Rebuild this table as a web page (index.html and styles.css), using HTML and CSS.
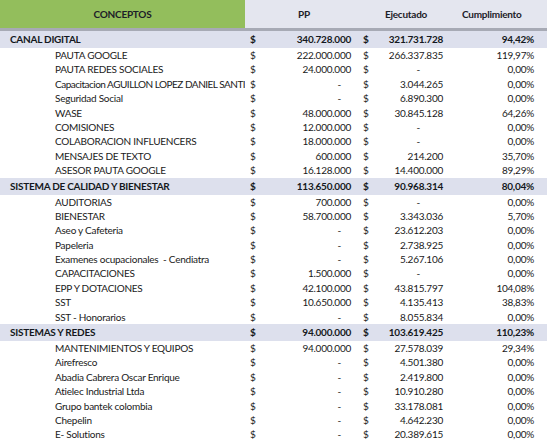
FILE: index.html
```html
<!DOCTYPE html>
<html>
<head>
<meta charset="utf-8">
<link rel="stylesheet" href="styles.css">
</head>
<body>
<div class="sheet">
  <div class="row head">
    <div class="c-concept head-green">CONCEPTOS</div>
    <div class="c-sign"></div>
    <div class="c-pp head-pp">PP</div>
    <div class="c-sign2"></div>
    <div class="c-ej head-ej">Ejecutado</div>
    <div class="c-cu head-cu">Cumplimiento</div>
  </div>

  <div class="row sec"><div class="c-concept">CANAL DIGITAL</div><div class="c-sign">$</div><div class="c-pp">340.728.000</div><div class="c-sign2">$</div><div class="c-ej">321.731.728</div><div class="c-cu">94,42%</div></div>
  <div class="row"><div class="c-concept sub">PAUTA GOOGLE</div><div class="c-sign">$</div><div class="c-pp">222.000.000</div><div class="c-sign2">$</div><div class="c-ej">266.337.835</div><div class="c-cu">119,97%</div></div>
  <div class="row"><div class="c-concept sub">PAUTA REDES SOCIALES</div><div class="c-sign">$</div><div class="c-pp">24.000.000</div><div class="c-sign2">$</div><div class="c-ej dash">-</div><div class="c-cu">0,00%</div></div>
  <div class="row"><div class="c-concept sub long">Capacitacion AGUILLON LOPEZ DANIEL SANTI</div><div class="c-sign">$</div><div class="c-pp dash">-</div><div class="c-sign2">$</div><div class="c-ej">3.044.265</div><div class="c-cu">0,00%</div></div>
  <div class="row"><div class="c-concept sub">Seguridad Social</div><div class="c-sign">$</div><div class="c-pp dash">-</div><div class="c-sign2">$</div><div class="c-ej">6.890.300</div><div class="c-cu">0,00%</div></div>
  <div class="row"><div class="c-concept sub">WASE</div><div class="c-sign">$</div><div class="c-pp">48.000.000</div><div class="c-sign2">$</div><div class="c-ej">30.845.128</div><div class="c-cu">64,26%</div></div>
  <div class="row"><div class="c-concept sub">COMISIONES</div><div class="c-sign">$</div><div class="c-pp">12.000.000</div><div class="c-sign2">$</div><div class="c-ej dash">-</div><div class="c-cu">0,00%</div></div>
  <div class="row"><div class="c-concept sub">COLABORACION INFLUENCERS</div><div class="c-sign">$</div><div class="c-pp">18.000.000</div><div class="c-sign2">$</div><div class="c-ej dash">-</div><div class="c-cu">0,00%</div></div>
  <div class="row"><div class="c-concept sub">MENSAJES DE TEXTO</div><div class="c-sign">$</div><div class="c-pp">600.000</div><div class="c-sign2">$</div><div class="c-ej">214.200</div><div class="c-cu">35,70%</div></div>
  <div class="row"><div class="c-concept sub">ASESOR PAUTA GOOGLE</div><div class="c-sign">$</div><div class="c-pp">16.128.000</div><div class="c-sign2">$</div><div class="c-ej">14.400.000</div><div class="c-cu">89,29%</div></div>

  <div class="row sec"><div class="c-concept">SISTEMA DE CALIDAD Y BIENESTAR</div><div class="c-sign">$</div><div class="c-pp">113.650.000</div><div class="c-sign2">$</div><div class="c-ej">90.968.314</div><div class="c-cu">80,04%</div></div>
  <div class="row"><div class="c-concept sub">AUDITORIAS</div><div class="c-sign">$</div><div class="c-pp">700.000</div><div class="c-sign2">$</div><div class="c-ej dash">-</div><div class="c-cu">0,00%</div></div>
  <div class="row"><div class="c-concept sub">BIENESTAR</div><div class="c-sign">$</div><div class="c-pp">58.700.000</div><div class="c-sign2">$</div><div class="c-ej">3.343.036</div><div class="c-cu">5,70%</div></div>
  <div class="row"><div class="c-concept sub">Aseo y Cafeteria</div><div class="c-sign">$</div><div class="c-pp dash">-</div><div class="c-sign2">$</div><div class="c-ej">23.612.203</div><div class="c-cu">0,00%</div></div>
  <div class="row"><div class="c-concept sub">Papeleria</div><div class="c-sign">$</div><div class="c-pp dash">-</div><div class="c-sign2">$</div><div class="c-ej">2.738.925</div><div class="c-cu">0,00%</div></div>
  <div class="row"><div class="c-concept sub">Examenes ocupacionales&nbsp; - Cendiatra</div><div class="c-sign">$</div><div class="c-pp dash">-</div><div class="c-sign2">$</div><div class="c-ej">5.267.106</div><div class="c-cu">0,00%</div></div>
  <div class="row"><div class="c-concept sub">CAPACITACIONES</div><div class="c-sign">$</div><div class="c-pp">1.500.000</div><div class="c-sign2">$</div><div class="c-ej dash">-</div><div class="c-cu">0,00%</div></div>
  <div class="row"><div class="c-concept sub">EPP Y DOTACIONES</div><div class="c-sign">$</div><div class="c-pp">42.100.000</div><div class="c-sign2">$</div><div class="c-ej">43.815.797</div><div class="c-cu">104,08%</div></div>
  <div class="row"><div class="c-concept sub">SST</div><div class="c-sign">$</div><div class="c-pp">10.650.000</div><div class="c-sign2">$</div><div class="c-ej">4.135.413</div><div class="c-cu">38,83%</div></div>
  <div class="row"><div class="c-concept sub">SST - Honorarios</div><div class="c-sign">$</div><div class="c-pp dash">-</div><div class="c-sign2">$</div><div class="c-ej">8.055.834</div><div class="c-cu">0,00%</div></div>

  <div class="row sec"><div class="c-concept">SISTEMAS Y REDES</div><div class="c-sign">$</div><div class="c-pp">94.000.000</div><div class="c-sign2">$</div><div class="c-ej">103.619.425</div><div class="c-cu">110,23%</div></div>
  <div class="row"><div class="c-concept sub">MANTENIMIENTOS Y EQUIPOS</div><div class="c-sign">$</div><div class="c-pp">94.000.000</div><div class="c-sign2">$</div><div class="c-ej">27.578.039</div><div class="c-cu">29,34%</div></div>
  <div class="row"><div class="c-concept sub">Airefresco</div><div class="c-sign">$</div><div class="c-pp dash">-</div><div class="c-sign2">$</div><div class="c-ej">4.501.380</div><div class="c-cu">0,00%</div></div>
  <div class="row"><div class="c-concept sub">Abadia Cabrera Oscar Enrique</div><div class="c-sign">$</div><div class="c-pp dash">-</div><div class="c-sign2">$</div><div class="c-ej">2.419.800</div><div class="c-cu">0,00%</div></div>
  <div class="row"><div class="c-concept sub">Atielec Industrial Ltda</div><div class="c-sign">$</div><div class="c-pp dash">-</div><div class="c-sign2">$</div><div class="c-ej">10.910.280</div><div class="c-cu">0,00%</div></div>
  <div class="row"><div class="c-concept sub">Grupo bantek colombia</div><div class="c-sign">$</div><div class="c-pp dash">-</div><div class="c-sign2">$</div><div class="c-ej">33.178.081</div><div class="c-cu">0,00%</div></div>
  <div class="row"><div class="c-concept sub">Chepelin</div><div class="c-sign">$</div><div class="c-pp dash">-</div><div class="c-sign2">$</div><div class="c-ej">4.642.230</div><div class="c-cu">0,00%</div></div>
  <div class="row"><div class="c-concept sub">E- Solutions</div><div class="c-sign">$</div><div class="c-pp dash">-</div><div class="c-sign2">$</div><div class="c-ej">20.389.615</div><div class="c-cu">0,00%</div></div>
</div>
</body>
</html>
```
FILE: styles.css
```css
html, body {
  margin: 0;
  padding: 0;
  background: #ffffff;
}
.sheet {
  width: 547px;
  font-family: Lato, "Open Sans", sans-serif;
  font-size: 10px;
  letter-spacing: -0.25px;
  color: #1a1a1a;
}
.row {
  display: grid;
  grid-template-columns: 245px 50px 60px 20px 90px 82px;
  height: 14.4px;
  line-height: 14.4px;
  white-space: nowrap;
}
.row > div {
  overflow: hidden;
}
.c-concept { padding-left: 10px; }
.c-concept.sub { padding-left: 55px; }
.c-concept.long { letter-spacing: -0.5px; }
.c-sign { padding-left: 5px; }
.c-pp { text-align: right; padding-right: 4px; }
.c-pp.dash { padding-right: 14px; }
.c-sign2 { padding-left: 8px; }
.c-ej { text-align: right; padding-right: 22px; }
.c-ej.dash { padding-right: 45px; }
.c-cu { text-align: right; padding-right: 13px; }

.head {
  height: 28px;
  line-height: 28px;
  background: #e4e6ef;
  border-bottom: 3px solid #a7aab5;
  font-weight: bold;
  color: #1c2028;
}
.head .head-green {
  background: #93be5c;
  text-align: center;
  padding-left: 0;
}
.head .head-pp { text-align: left; padding-left: 3px; padding-right: 0; }
.head .head-ej { text-align: left; padding-left: 10px; padding-right: 0; }
.head .head-cu { text-align: left; padding-left: 0; padding-right: 0; margin-left: -3px; }

.sec {
  height: 17px;
  line-height: 17px;
  background: #dde0ed;
  font-weight: bold;
  color: #141820;
}
```
